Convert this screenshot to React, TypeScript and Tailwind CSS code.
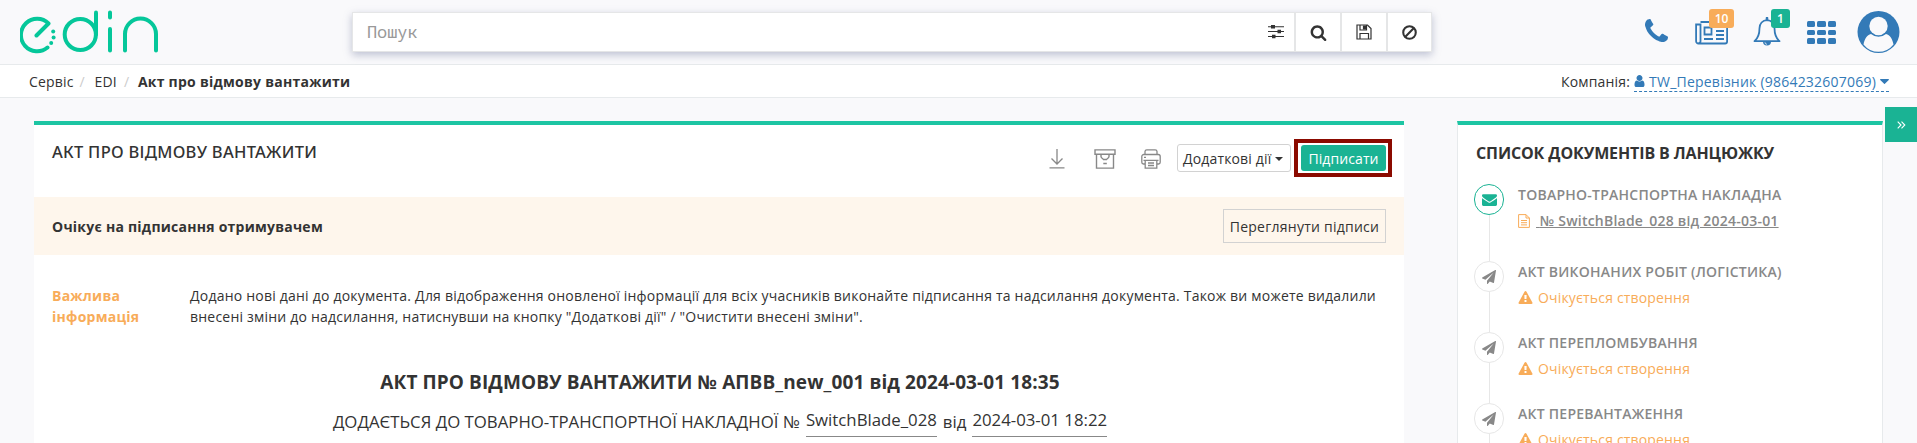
import React from "react";

type IconProps = { d: string; className?: string; viewBox?: string };

const Glyph = ({ d, className = "", viewBox = "0 0 1792 1792" }: IconProps) => (
  <svg viewBox={viewBox} className={`block shrink-0 ${className}`} fill="currentColor">
    <path d={d} />
  </svg>
);

const SEARCH =
  "M1216 832q0-185-131.5-316.5t-316.5-131.5-316.5 131.5-131.5 316.5 131.5 316.5 316.5 131.5 316.5-131.5 131.5-316.5zm512 832q0 52-38 90t-90 38q-54 0-90-38l-343-342q-179 124-399 124-143 0-273.5-55.5t-225-150-150-225-55.5-273.5 55.5-273.5 150-225 225-150 273.5-55.5 273.5 55.5 225 150 150 225 55.5 273.5q0 220-124 399l343 343q37 37 37 90z";
const PHONE =
  "M1600 1240q0 27-10 70.5t-21 68.5q-21 50-122 106-94 51-186 51-27 0-53-3.5t-57.5-12.5-47-14.5-55.5-20.5-49-18q-98-35-175-83-127-79-264-216t-216-264q-48-77-83-175-3-9-18-49t-20.5-55.5-14.5-47-12.5-57.5-3.5-53q0-92 51-186 56-101 106-122 25-11 68.5-21t70.5-10q14 0 21 3 18 6 53 76 11 19 30 54t35 63.5 31 53.5q3 4 17.5 25t21.5 35.5 7 28.5q0 20-28.5 50t-62 55-62 53-28.5 46q0 9 5 22.5t8.5 20.5 14 24 11.5 19q76 137 174 235t235 174q2 1 19 11.5t24 14 20.5 8.5 22.5 5q18 0 46-28.5t53-62 55-62 50-28.5q14 0 28.5 7t35.5 21.5 25 17.5q25 15 53.5 31t63.5 35 54 30q70 35 76 53 3 7 3 21z";
const PLANE =
  "M1764 11q33 24 27 64l-256 1536q-5 29-32 45-14 8-31 8-11 0-24-5l-453-185-242 295q-18 23-49 23-13 0-22-4-19-7-30.5-23.5t-11.5-36.5v-349l864-1059-1069 925-395-162q-37-14-40-55-2-40 32-59l1664-960q15-9 32-9 20 0 36 11z";
const ENVELOPE =
  "M1792 710v794q0 66-47 113t-113 47h-1472q-66 0-113-47t-47-113v-794q44 49 101 87 362 246 497 345 57 42 92.5 65.5t94.5 48 110 24.5h2q51 0 110-24.5t94.5-48 92.5-65.5q170-123 498-345 57-39 100-87zm0-294q0 79-49 151t-122 123q-376 261-468 325-10 7-42.5 30.5t-54 38-52 32.5-57.5 27-50 9h-2q-23 0-50-9t-57.5-27-52-32.5-54-38-42.5-30.5q-91-64-262-182.5t-205-142.5q-62-42-117-115.5t-55-136.5q0-78 41.5-130t118.5-52h1472q65 0 112.5 47t47.5 113z";
const WARNING =
  "M1024 1375v-190q0-14-9.5-23.5t-22.5-9.5h-192q-13 0-22.5 9.5t-9.5 23.5v190q0 14 9.5 23.5t22.5 9.5h192q13 0 22.5-9.5t9.5-23.5zm-2-374l18-459q0-12-10-19-13-11-24-11h-220q-11 0-24 11-10 7-10 21l17 457q0 10 10 16.5t24 6.5h185q14 0 23.5-6.5t10.5-16.5zm-14-934l768 1408q35 63-2 126-17 29-46.5 46t-63.5 17h-1536q-34 0-63.5-17t-46.5-46q-37-63-2-126l768-1408q17-31 47-49t65-18 65 18 47 49z";
const USER =
  "M1536 1399q0 109-62.5 187t-150.5 78h-854q-88 0-150.5-78t-62.5-187q0-85 8.5-160.5t31.5-152 58.5-131 94-89 134.5-34.5q131 128 313 128t313-128q76 0 134.5 34.5t94 89 58.5 131 31.5 152 8.500 160.500zm-256-887q0 159-112.5 271.5t-271.5 112.5-271.5-112.5-112.5-271.5 112.5-271.5 271.5-112.5 271.5 112.5 112.5 271.5z";
const CARET =
  "M1408 704q0 26-19 45l-448 448q-19 19-45 19t-45-19l-448-448q-19-19-19-45t19-45 45-19h896q26 0 45 19t19 45z";

const Logo = () => (
  <svg viewBox="0 0 140 46" className="block h-[46px] w-[140px]" fill="none" stroke="#05c79a" strokeWidth="4" strokeLinecap="round">
    <path d="M16.500 27.500 28.500 15.500A16.200 16.200 0 1 0 27.500 39.500" strokeLinejoin="round" />
    <circle cx="60.300" cy="26.500" r="15.600" />
    <path d="M76 4.500v22" />
    <path d="M90 4.500v5M90 21v21.500" />
    <path d="M105 42.500V26a15.500 15.500 0 0 1 31 0V42.500" />
    <g fill="#05c79a" stroke="none">
      <circle cx="33.200" cy="23.500" r="2" />
      <circle cx="33.600" cy="29.500" r="2" />
      <circle cx="31.200" cy="35" r="2" />
    </g>
  </svg>
);

const IconTool = ({ children, className }: { children: React.ReactNode; className: string }) => (
  <div className={`flex h-full items-center justify-center border-l-2 border-[#e5e6e7] ${className}`}>{children}</div>
);

const Header = () => (
  <header className="flex h-[65px] border-b border-[#e7eaec] tracking-normal">
    <div className="w-[352px] pt-[8px] pl-[20px]">
      <Logo />
    </div>
    <div className="mt-[12px] flex h-[40px] w-[1080px] border border-[#e5e6e7] bg-white text-[#333] shadow-[0_3px_8px_rgba(100,110,150,0.4)]">
      <div className="flex flex-1 items-center pl-[14px] font-['Noto_Sans_Mono',monospace] text-[17px] tracking-[-0.100px] text-[#999]">Пошук</div>
      <svg viewBox="0 0 16 14" className="mt-[12px] mr-[10px] block h-[14px] w-[16px]" fill="#333">
        <path d="M0 1.200h16v1H0zM0 6h16v1H0zM0 11h16v1H0z" />
        <path d="M3 0h4v3.500H3zM9.500 4.800h3.500v3.500H9.500zM4 9.800h3.500v3.500H4z" />
      </svg>
      <IconTool className="w-[46px]"><Glyph d={SEARCH} className="h-[17px] w-[17px]" /></IconTool>
      <IconTool className="w-[46px]">
        <svg viewBox="0 0 16 16" className="block h-[16px] w-[16px]" fill="none" stroke="#333" strokeWidth="1.200">
          <path d="M1 1h10.500L15 4.500V15H1z" />
          <path d="M4 15V9.500h8.500V15M4 1v5h6.500V1" />
          <path d="M7.500 2h2v3h-2z" fill="#333" />
        </svg>
      </IconTool>
      <IconTool className="w-[45px]">
        <svg viewBox="0 0 16 16" className="block h-[15px] w-[15px]" fill="none" stroke="#333" strokeWidth="2.200">
          <circle cx="8" cy="8" r="6.700" />
          <path d="M3.300 12.700l9.400-9.400" />
        </svg>
      </IconTool>
    </div>
    <nav className="flex flex-1 text-[#337ab7]">
      <div className="ml-[208px] w-[54px] pt-[14px]">
        <Glyph d={PHONE} viewBox="192 128 1408 1408" className="mt-[5px] ml-[5px] h-[23px] w-[23px]" />
      </div>
      <div className="relative w-[59px]">
        <svg viewBox="0 0 34 24" className="mt-[21px] ml-[1px] block h-[24px] w-[34px]" fill="none" stroke="currentColor" strokeWidth="1.800">
          <path d="M5.500 1h26.600v19.500a2 2 0 0 1-2 2H3.500a2.300 2.300 0 0 1-2.400-2.300V3.500h4.400v16.700a2 2 0 0 1-2 2" />
          <path d="M9.500 6.500h7v7h-7zM21 5.800h8M21 10h8M21 14h8M9 18h9M21 18h8" />
        </svg>
        <span className="absolute top-[9px] left-[15px] flex h-[19px] w-[25px] items-center justify-center rounded-[3px] bg-[#f8ac59] text-[12px] font-semibold text-white">10</span>
      </div>
      <div className="relative w-[54px]">
        <svg viewBox="0 0 28 30" className="mt-[17px] block h-[30px] w-[28px]" fill="none" stroke="currentColor" strokeWidth="1.800" strokeLinejoin="round">
          <path d="M14 3.200c-4.500 0-7.500 3.500-7.500 8 0 6.300-1.500 10-5 13h25c-3.500-3-5-6.700-5-13 0-4.500-3-8-7.500-8z" />
          <path d="M14 1v2" strokeWidth="2.600" strokeLinecap="round" />
          <path d="M10 24.500a4 4 0 0 0 8 0z" fill="currentColor" stroke="none" />
          <path d="M14 27.300a2 2 0 0 1-2-2" stroke="white" strokeWidth=".7" />
        </svg>
        <span className="absolute top-[9px] left-[18px] flex h-[19px] w-[19px] items-center justify-center rounded-[3px] bg-[#1ab394] text-[12px] font-semibold text-white">1</span>
      </div>
      <div className="mt-[21px] grid h-[23px] w-[29px] grid-cols-3 grid-rows-3 gap-x-[2px] gap-y-[3px]">
        {Array.from({ length: 9 }, (_, i) => (
          <i key={i} className="rounded-[1.500px] bg-[#337ab7]" />
        ))}
      </div>
      <svg viewBox="0 0 42 42" className="mt-[11px] ml-[21px] block h-[42px] w-[43px]">
        <circle cx="21" cy="21" r="21" fill="#337ab7" />
        <circle cx="21" cy="15" r="9.200" fill="#f9f9fb" />
        <path d="M6 33.500c1-5.500 3.500-9.500 7.500-10.500a11.500 11.500 0 0 0 15 0c4 1 6.500 5 7.500 10.500a19 19 0 0 1-30 0z" fill="#f9f9fb" />
      </svg>
    </nav>
  </header>
);

const Breadcrumbs = () => (
  <div className="flex h-[33px] items-center justify-between border-b border-[#e7eaec] bg-white pt-[1px] pr-[28px] pl-[29px]">
    <div className="flex">
      <span>Сервіс</span>
      <span className="w-[21px] pl-[6px] text-[#ccc]">/</span>
      <span>EDI</span>
      <span className="w-[21px] pl-[7px] text-[#ccc]">/</span>
      <b className="tracking-[0.250px]">Акт про відмову вантажити</b>
    </div>
    <div className="flex">
      <span className="mr-[4px]">Компанія:</span>
      <span className="flex h-[21px] items-center border-b border-dashed border-[#337ab7] text-[#337ab7]">
        <Glyph d={USER} viewBox="256 128 1280 1536" className="mr-[4px] h-[12px] w-[11px]" />
        <span className="tracking-[0.220px]">TW_Перевізник (9864232607069)</span>
        <Glyph d={CARET} viewBox="384 640 1024 576" className="ml-[4px] h-[5px] w-[9px]" />
      </span>
    </div>
  </div>
);

const Toolbar = () => (
  <div className="flex h-[72px] justify-between pr-[12px] pl-[18px]">
    <h1 className="pt-[16px] font-['Noto_Sans',sans-serif] text-[16.500px] leading-[22px] font-medium tracking-[0.280px]">АКТ ПРО ВІДМОВУ ВАНТАЖИТИ</h1>
    <div className="flex text-[#888]">
      <svg viewBox="0 0 16 20" className="mt-[24px] mr-[29px] block h-[20px] w-[16px]" fill="none" stroke="currentColor" strokeWidth="1.300">
        <path d="M8 0v14.500M2.500 9.500 8 15l5.500-5.500M.5 18.800h15" />
      </svg>
      <svg viewBox="0 0 22 20" className="mt-[24px] mr-[25px] block h-[20px] w-[22px]" fill="none" stroke="currentColor" strokeWidth="1.400">
        <path d="M1 .9h20v4.300H1zM2.500 5.500v13.600h17V5.500M7 6v1.500c0 1.500 2 2 2.500 3h3c.5-1 2.500-1.500 2.500-3V6M9.300 14.500h3.500" />
      </svg>
      <svg viewBox="0 0 20 20" className="mt-[24px] mr-[16px] block h-[20px] w-[20px]" fill="none" stroke="currentColor" strokeWidth="1.300">
        <path d="M4 5.500V2.500A1.800 1.800 0 0 1 5.800.8h8.400A1.800 1.800 0 0 1 16 2.500v3M4 15H2.500A1.800 1.800 0 0 1 .8 13.200V7.500a2 2 0 0 1 2-2h14.400a2 2 0 0 1 2 2v5.700a1.800 1.800 0 0 1-1.700 1.800H16M2.500 11.300h15M4.200 11.500v7.700h11.600v-7.700M7 14h6M7 16.500h6M3 8.300h2" />
      </svg>
      <button className="mt-[19px] flex h-[28px] w-[114px] items-center rounded-[3px] border border-[#d2d2d2] bg-white pl-[5px] tracking-[0.150px] text-[#333]">
        Додаткові дії
        <svg viewBox="0 0 8 4" className="mt-[1px] ml-[4px] block h-[4px] w-[8px]" fill="#333"><path d="M0 0h8L4 4z" /></svg>
      </button>
      <div className="mt-[14px] ml-[3px] h-[38px] w-[98px] border-4 border-[#8b0a00] pt-[2px] pl-[3px]">
        <button className="flex h-[26px] w-[85px] items-center justify-center rounded-[3px] bg-[#1ab394] tracking-[0.100px] text-white">Підписати</button>
      </div>
    </div>
  </div>
);

const DocumentCard = () => (
  <main className="flex h-[322px] w-[1370px] flex-col border-t-4 border-[#1dc5a3] bg-white">
    <Toolbar />
    <div className="flex h-[58px] items-center justify-between bg-[#fef6ec] pr-[18px] pl-[18px]">
      <b className="tracking-[0.240px]">Очікує на підписання отримувачем</b>
      <button className="flex h-[34px] w-[163px] items-center justify-center border border-[#d2d2d2] tracking-[0.250px]">Переглянути підписи</button>
    </div>
    <div className="flex pt-[30px] pl-[18px] leading-[21px]">
      <b className="w-[138px] tracking-[0.240px] text-[#f8ac59]">Важлива<br />інформація</b>
      <p className="tracking-[0.210px] whitespace-nowrap">
        Додано нові дані до документа. Для відображення оновленої інформації для всіх учасників виконайте підписання та надсилання документа. Також ви можете видалили<br />
        внесені зміни до надсилання, натиснувши на кнопку "Додаткові дії" / "Очистити внесені зміни".
      </p>
    </div>
    <h2 className="mt-[41px] self-center pl-[2px] text-[19px] leading-[28px] font-bold tracking-[0.100px] whitespace-nowrap">АКТ ПРО ВІДМОВУ ВАНТАЖИТИ № АПВВ_new_001 від 2024-03-01 18:35</h2>
    <div className="mt-[8px] flex self-center pl-[2px] text-[16.800px] leading-[26px] tracking-normal whitespace-nowrap">
      <span className="pt-[5px]">ДОДАЄТЬСЯ ДО ТОВАРНО-ТРАНСПОРТНОЇ НАКЛАДНОЇ №</span>
      <span className="ml-[6px] h-[33px] border-b border-[#888] pt-[3px]">SwitchBlade_028</span>
      <span className="mx-[6px] pt-[5px]">від</span>
      <span className="h-[33px] border-b border-[#888] pt-[3px]">2024-03-01 18:22</span>
    </div>
  </main>
);

type ChainItem = { title: string; number?: string };

const CHAIN: ChainItem[] = [
  { title: "ТОВАРНО-ТРАНСПОРТНА НАКЛАДНА", number: "№ SwitchBlade_028 від 2024-03-01" },
  { title: "АКТ ВИКОНАНИХ РОБІТ (ЛОГІСТИКА)" },
  { title: "АКТ ПЕРЕПЛОМБУВАННЯ" },
  { title: "АКТ ПЕРЕВАНТАЖЕННЯ" },
];

const ChainRow = ({ title, number }: ChainItem) => (
  <li className={`flex shrink-0 ${number ? "h-[77px]" : "h-[71px]"}`}>
    <div className="flex w-[30px] flex-col items-center">
      <div className={`flex h-[31px] w-[30px] shrink-0 items-center justify-center rounded-full border ${number ? "border-[#1ab394] text-[#1ab394]" : "border-[#e7e7e7]"}`}>
        {number ? <Glyph d={ENVELOPE} className="h-[15px] w-[15px]" /> : <Glyph d={PLANE} className="h-[14px] w-[14px]" />}
      </div>
      <div className="w-px flex-1 bg-[#e7e7e7]" />
    </div>
    <div className="ml-[14px] whitespace-nowrap">
      <div className="leading-[22px] font-semibold tracking-[0.250px]">{title}</div>
      {number ? (
        <div className="mt-[4px] flex items-center leading-[22px] font-semibold tracking-[0.220px]">
          <svg viewBox="0 0 12 14" className="mr-[6px] block h-[14px] w-[12px]" fill="none" stroke="#f8ac59">
            <path d="M.6.6h7.400l3.400 3.400v9.400H.6zM8 .6V4h3.400M3 6.500h6M3 8.700h6M3 10.900h6" />
          </svg>
          <span className="whitespace-pre underline"> {number}</span>
        </div>
      ) : (
        <div className="mt-[4px] flex items-center leading-[22px] text-[#f8ac59]">
          <Glyph d={WARNING} className="mr-[5px] h-[14px] w-[15px]" />
          Очікується створення
        </div>
      )}
    </div>
  </li>
);

const ChainCard = () => (
  <aside className="ml-[53px] flex h-[322px] w-[426px] flex-col overflow-hidden border-x border-t-4 border-x-[#e7eaec] border-t-[#1dc5a3] bg-white pl-[16px]">
    <h3 className="mt-[17px] pl-[2px] text-[16px] leading-[22px] font-bold tracking-[-0.120px]">СПИСОК ДОКУМЕНТІВ В ЛАНЦЮЖКУ</h3>
    <ul className="mt-[20px] flex flex-col text-[#888]">
      {CHAIN.map((item) => (
        <ChainRow key={item.title} {...item} />
      ))}
    </ul>
  </aside>
);

export default function App() {
  return (
    <div className="relative h-[443px] w-[1917px] overflow-hidden bg-[#f9f9fb] font-['Open_Sans',sans-serif] text-[14px] tracking-[0.170px] text-[#333]">
      <Header />
      <Breadcrumbs />
      <div className="mt-[23px] flex pl-[34px]">
        <DocumentCard />
        <ChainCard />
      </div>
      <button className="absolute top-[107px] right-0 flex h-[35px] w-[32px] items-center justify-center bg-[#1ab394]">
        <svg viewBox="0 0 9 8" className="mt-[1px] block h-[8px] w-[9px]" fill="none" stroke="white" strokeWidth="1.100">
          <path d="M.7.600 4 4 .7 7.400M4.500.600 7.800 4 4.500 7.400" />
        </svg>
      </button>
    </div>
  );
}
